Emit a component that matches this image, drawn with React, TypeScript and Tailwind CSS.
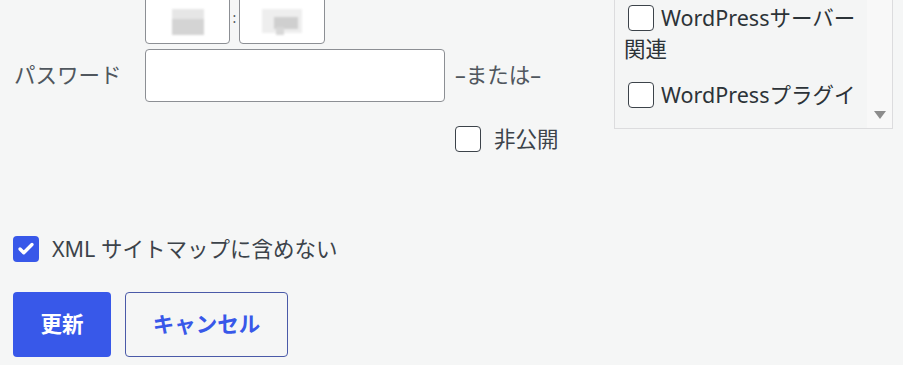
import { Check } from "lucide-react";

const Box = ({ checked = false }: { checked?: boolean }) =>
  checked ? (
    <span className="flex h-[26px] w-[26px] shrink-0 items-center justify-center rounded-[4px] bg-[#3858e9]">
      <Check className="h-[18px] w-[18px] text-white" strokeWidth={4.5} />
    </span>
  ) : (
    <span className="h-[26px] w-[26px] shrink-0 rounded-[4px] border-[1.5px] border-[#3c434a] bg-white" />
  );

const Blurred = ({ variant }: { variant: number }) =>
  variant === 1 ? (
    <div className="relative h-[26px] w-[32px] blur-[1px]">
      <div className="absolute left-0 top-0 h-[12px] w-[32px] bg-[#e6e6e6]" />
      <div className="absolute left-0 top-[10px] h-[16px] w-[32px] bg-[#d4d4d4]" />
    </div>
  ) : (
    <div className="relative h-[26px] w-[40px] blur-[1px]">
      <div className="absolute left-0 top-0 h-[24px] w-[40px] bg-[#eeeeee]" />
      <div className="absolute left-[12px] top-[8px] h-[12px] w-[24px] bg-[#cfcfcf]" />
      <div className="absolute left-[14px] top-[18px] h-[8px] w-[8px] bg-[#d8d8d8]" />
    </div>
  );

export default function App() {
  return (
    <div
      className="flex h-[365px] w-[903px] overflow-hidden bg-[#f5f6f6] text-[#3c434a]"
      style={{ fontFamily: '"Noto Sans", "Noto Sans CJK JP", sans-serif' }}
    >
      {/* Left form column */}
      <div className="flex w-[614px] shrink-0 flex-col">
        {/* Time inputs */}
        <div className="-mt-[9px] ml-[145px] flex items-center">
          <div className="flex h-[53px] w-[85px] items-center justify-center rounded-[4px] border border-[#8c8f94] bg-white pt-[8px]">
            <Blurred variant={1} />
          </div>
          <span className="w-[9px] text-center text-[14px] leading-none text-[#50575e]">:</span>
          <div className="flex h-[53px] w-[86px] items-center justify-center rounded-[4px] border border-[#8c8f94] bg-white pt-[8px]">
            <Blurred variant={2} />
          </div>
        </div>

        {/* Password */}
        <div className="mt-[5px] flex items-center">
          <span className="w-[145px] pl-[14px] text-[21.5px] text-[#50575e]">パスワード</span>
          <div className="h-[53px] w-[300px] rounded-[4px] border border-[#8c8f94] bg-white" />
          <span className="ml-[10px] text-[21.5px] text-[#50575e]">–または–</span>
        </div>

        {/* Private */}
        <div className="ml-[455px] mt-[24px] flex h-[26px] items-center gap-[13px]">
          <Box />
          <span className="text-[21.5px]">非公開</span>
        </div>

        {/* Sitemap */}
        <div className="ml-[13px] mt-[84px] flex h-[26px] items-center gap-[13px]">
          <Box checked />
          <span className="text-[21.5px]">XML サイトマップに含めない</span>
        </div>

        {/* Buttons */}
        <div className="ml-[13px] mt-[30px] flex gap-[14px]">
          <button className="h-[65px] w-[98px] rounded-[4px] bg-[#3858e9] text-[21.5px] font-bold text-white">
            更新
          </button>
          <button className="h-[65px] w-[163px] rounded-[4px] border border-[#4a5aa8] bg-transparent text-[21.5px] font-bold text-[#3858e9]">
            キャンセル
          </button>
        </div>
      </div>

      {/* Category list */}
      <div className="-mt-[10px] flex h-[139px] w-[279px] shrink-0 border border-[#dcdcde] bg-[#f4f5f5]">
        <div className="w-[244px] overflow-hidden pl-[9px] pt-[11px] text-[21.5px] leading-[31px] text-[#2c3338]">
          <div>
            <span className="mr-[7px] ml-[4px] inline-block h-[26px] w-[26px] rounded-[4px] border-[1.5px] border-[#3c434a] bg-white align-[-5px]" />
            WordPressサーバー関連
          </div>
          <div className="mt-[15px] whitespace-nowrap">
            <span className="mr-[7px] ml-[4px] inline-block h-[26px] w-[26px] rounded-[4px] border-[1.5px] border-[#3c434a] bg-white align-[-5px]" />
            WordPressプラグイ
          </div>
        </div>
        <div className="ml-auto flex w-[25px] flex-col justify-end bg-[#f8f8f8] pb-[9px]">
          <svg viewBox="0 0 12 8" className="mx-auto h-[8px] w-[12px]">
            <path d="M0 0 H12 L6 8 Z" fill="#8c8c8c" />
          </svg>
        </div>
      </div>
    </div>
  );
}
